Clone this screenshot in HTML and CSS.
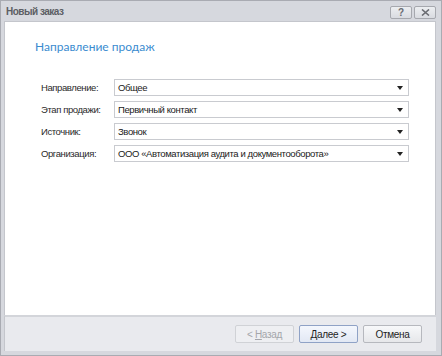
FILE: index.html
```html
<!doctype html>
<html lang="ru">
<head>
<meta charset="utf-8">
<title>Новый заказ</title>
<link rel="stylesheet" href="styles.css">
</head>
<body>

<div class="window">
  <div class="titlebar">
    <span class="title">Новый заказ</span>
    <div class="tb-btns">
      <button class="tb-btn">?</button>
      <button class="tb-btn">
        <svg width="9" height="7" viewBox="0 0 9 7"><path d="M1 0.5 L8 6.5 M8 0.5 L1 6.5" stroke="#6a6c72" stroke-width="1.6"/></svg>
      </button>
    </div>
  </div>

  <div class="page">
    <h1 class="heading">Направление продаж</h1>

    <div class="form">
      <label class="lbl">Направление:</label>
      <div class="combo"><span>Общее</span><i class="arr"></i></div>

      <label class="lbl">Этап продажи:</label>
      <div class="combo"><span>Первичный контакт</span><i class="arr"></i></div>

      <label class="lbl">Источник:</label>
      <div class="combo"><span>Звонок</span><i class="arr"></i></div>

      <label class="lbl">Организация:</label>
      <div class="combo"><span>ООО «Автоматизация аудита и документооборота»</span><i class="arr"></i></div>
    </div>
  </div>

  <div class="footer">
    <button class="btn disabled">&lt; <u>Н</u>азад</button>
    <button class="btn default"><u>Д</u>алее &gt;</button>
    <button class="btn">Отмена</button>
  </div>
</div>

</body>
</html>
```

FILE: styles.css
```css
*{box-sizing:border-box;margin:0;padding:0}
body{font-family:'Liberation Sans',Arial,sans-serif;font-size:9.5px;letter-spacing:-.4px;color:#1e1e1e;background:#fff}

.window{
  width:442px;height:356px;display:flex;flex-direction:column;
  background:#d6d8de;border:1px solid #a9abb2;padding:0 5px 4px 3px
}
.titlebar{height:20px;display:flex;align-items:center;justify-content:space-between;padding:0 0 0 2px}
.title{font-weight:700;color:#5c5e64;font-size:10px;letter-spacing:-.5px}
.tb-btns{display:flex;gap:2px;margin-top:2px}
.tb-btn{
  width:22px;height:13px;border:1px solid #a6a8ae;border-radius:2px;
  background:linear-gradient(#eceef1,#d9dbe0);color:#6a6c72;font:700 10px/11px 'Liberation Sans',sans-serif;
  display:flex;align-items:center;justify-content:center
}

.page{flex:1;background:#fff;border:1px solid #c4c6cc;border-bottom:none;padding:17px 0 0 30px}
.heading{font:400 12px 'Lato',sans-serif;letter-spacing:0;color:#3a8bcf;margin-bottom:25px}

.form{display:grid;grid-template-columns:73px 295px;row-gap:5px;padding-left:6px}
.lbl{align-self:center;color:#2a2a2a}
.combo{
  height:17px;border:1px solid #c9cbd0;display:flex;align-items:center;
  justify-content:space-between;padding:0 5px 0 3px;color:#1a1a1a
}
.arr{width:0;height:0;border-left:3px solid transparent;border-right:3px solid transparent;border-top:4px solid #222}

.footer{
  height:36px;background:#e9eaee;border-top:2px solid #d3d5da;border-left:1px solid #c4c6cc;
  display:flex;justify-content:flex-end;align-items:center;gap:5px;padding:0 14px 0 0
}
.btn{
  width:59px;height:18px;border:1px solid #b6b8be;border-radius:2px;
  background:linear-gradient(#f7f8fa,#e6e7ea);font:10px 'Liberation Sans',sans-serif;letter-spacing:-.3px;color:#1e1e1e
}
.btn u{text-decoration:underline}
.btn.disabled{color:#a4a6ab;border-color:#d0d2d6;background:#eeeff2}
.btn.default{border-color:#8fa2c6;background:linear-gradient(#f4f7fd,#e2e8f4)}
```
